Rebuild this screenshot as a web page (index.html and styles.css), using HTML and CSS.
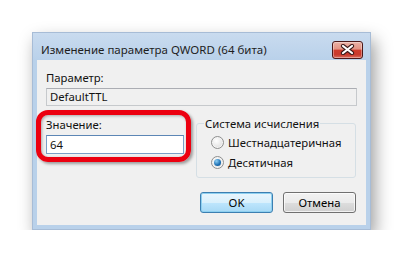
FILE: index.html
```html
<!DOCTYPE html>
<html lang="ru">
<head>
    <meta charset="UTF-8">
    <title>Изменение параметра QWORD</title>
    <link rel="stylesheet" href="styles.css">
</head>
<body>
    <div class="window">
        <div class="titlebar">
            <span class="title">Изменение параметра QWORD (64 бита)</span>
            <button class="close" type="button" aria-label="Закрыть">
                <svg width="15" height="11" viewBox="0 0 15 11">
                    <path d="M3 2 L12 9 M12 2 L3 9" stroke="#3b1a1a" stroke-width="4.2" stroke-linecap="round"/>
                    <path d="M3 2 L12 9 M12 2 L3 9" stroke="#fff" stroke-width="2.2" stroke-linecap="round"/>
                </svg>
            </button>
        </div>
        <div class="client">
            <div class="label">Параметр:</div>
            <div class="field readonly">DefaultTTL</div>

            <div class="row">
                <div class="value-col">
                    <div class="label">Значение:</div>
                    <div class="field input">64</div>
                    <!-- red marker drawn over the value box -->
                    <div class="highlight"></div>
                </div>
                <fieldset class="group">
                    <legend>Система исчисления</legend>
                    <label class="radio"><span class="dot"></span>Шестнадцатеричная</label>
                    <label class="radio checked"><span class="dot"></span>Десятичная</label>
                </fieldset>
            </div>

            <div class="buttons">
                <button class="btn default" type="button">OK</button>
                <button class="btn" type="button">Отмена</button>
            </div>
        </div>
    </div>
</body>
</html>
```

FILE: styles.css
```css
body {
    margin: 0;
    padding: 32px 0 0 32px;
    background: #fff;
    font-family: "Noto Sans", "DejaVu Sans", sans-serif;
    font-size: 11.3px;
    color: #111;
}

.window {
    width: 337px;
    height: 196px;
    border: 1px solid #a7bcd6;
    background: #b9d1ea;
    box-shadow: 4px 8px 16px rgba(0, 0, 0, 0.38);
    display: flex;
    flex-direction: column;
}

.titlebar {
    height: 27px;
    padding: 0 7px 0 8px;
    display: flex;
    align-items: center;
    justify-content: space-between;
    background: linear-gradient(#c9dbef, #b9d1ea);
}

.title {
    color: #1e1e1e;
    font-size: 11.5px;
    margin-top: 6px;
}

.close {
    width: 31px;
    height: 18px;
    margin-top: 6px;
    padding: 0;
    border: 1px solid #4c1818;
    border-radius: 3px;
    background: linear-gradient(#eab1a6 0%, #e49383 45%, #cf3b2c 50%, #c83a2d 80%, #da7061 100%);
    box-shadow: inset 0 0 0 1px rgba(255, 255, 255, 0.35);
    display: flex;
    align-items: center;
    justify-content: center;
}

.client {
    flex: 1;
    margin: 0 4px 4px 4px;
    background: #f0f0f0;
    padding: 10px 9px 11px 9px;
    display: flex;
    flex-direction: column;
}

.label {
    line-height: 15px;
    height: 15px;
}

.field {
    box-sizing: border-box;
    height: 18px;
    margin-top: 3px;
    padding: 0 3px;
    line-height: 16px;
    border: 1px solid #c6c9cc;
    border-top-color: #abadb3;
}

.readonly {
    width: 311px;
    background: #f0f0f0;
}

.row {
    display: flex;
    gap: 12px;
    margin-top: 10px;
}

.value-col {
    position: relative;
    width: 138px;
}

.value-col .label {
    margin-top: 1px;
}

.input {
    height: 19px;
    line-height: 17px;
    margin-top: 3px;
    background: #fff;
    border-color: #7a9fc6;
    border-top-color: #5c86b5;
}

.highlight {
    position: absolute;
    left: -10px;
    top: -6px;
    width: 155px;
    height: 52px;
    box-sizing: border-box;
    border: 5px solid #ec0010;
    border-radius: 12px;
    box-shadow: 2px 2px 3px rgba(0, 0, 0, 0.35), inset 1px 1px 3px rgba(0, 0, 0, 0.3);
}

.group {
    width: 160px;
    box-sizing: border-box;
    margin: 0;
    padding: 1px 6px 5px 7px;
    border: 1px solid #d5dfe5;
    border-radius: 3px;
    min-width: 0;
}

.group legend {
    padding: 0 1px;
    line-height: 15px;
}

.radio {
    display: flex;
    align-items: center;
    height: 20px;
    margin-left: 7px;
}

.dot {
    width: 11px;
    height: 11px;
    margin-right: 4px;
    border: 1px solid #8e8f8f;
    border-radius: 50%;
    background: radial-gradient(circle at 40% 35%, #fff 0%, #e6e6e6 60%, #cfcfcf 100%);
    box-shadow: inset 0 0 0 1px #f4f4f4;
    position: relative;
}

.checked .dot::after {
    content: "";
    position: absolute;
    left: 2px;
    top: 2px;
    width: 7px;
    height: 7px;
    border-radius: 50%;
    background: radial-gradient(circle at 35% 30%, #8fd0f5, #1c6fb3 60%, #0d4f8a);
}

.buttons {
    display: flex;
    justify-content: flex-end;
    gap: 10px;
    margin-top: 14px;
    padding-right: 1px;
}

.btn {
    width: 73px;
    height: 21px;
    padding: 0;
    font: inherit;
    color: #000;
    border: 1px solid #707070;
    border-radius: 3px;
    background: linear-gradient(#f2f2f2 0%, #ebebeb 50%, #dddddd 51%, #cfcfcf 100%);
    box-shadow: inset 0 0 0 1px rgba(255, 255, 255, 0.7);
}

.btn.default {
    border-color: #3c7fb1;
    background: linear-gradient(#eaf6fd 0%, #d9f0fc 50%, #bee6fd 51%, #a7d9f5 100%);
    box-shadow: inset 0 0 0 1px #8ed0f0;
}
```
